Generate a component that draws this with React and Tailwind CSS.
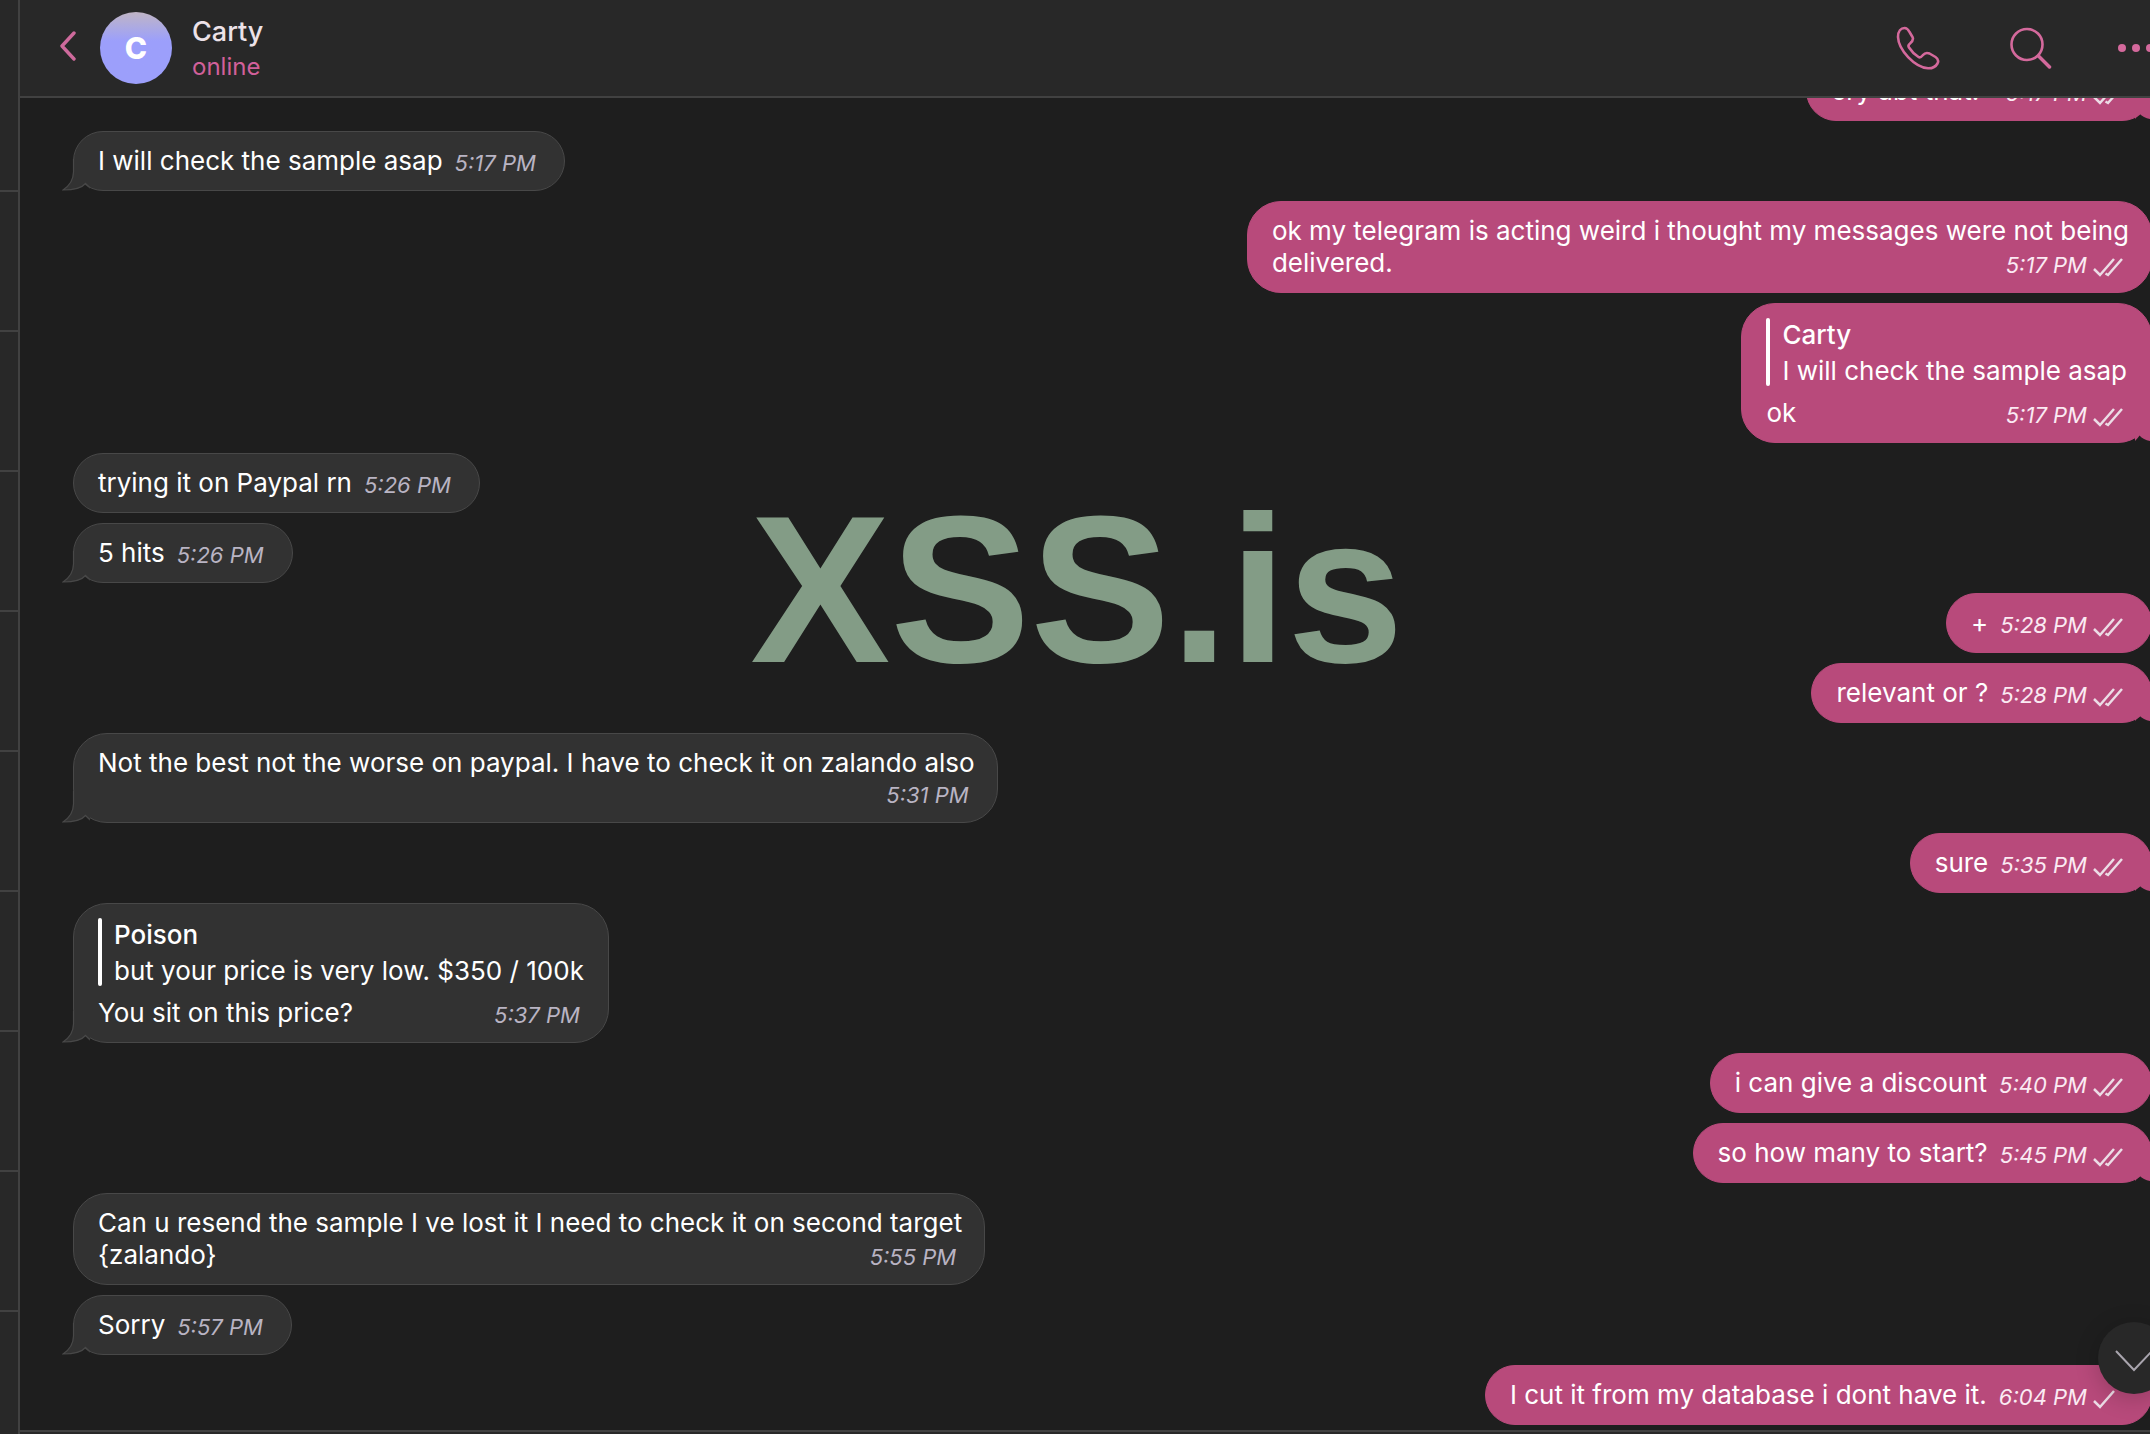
import clsx from "clsx";

// the last line of a message shares its row with the time
const messages = [
    { id: 1, out: true, tail: true, lines: ["cry abt that.\u00a0\u00a0"], time: "5:17 PM", status: "read" },
    { id: 2, out: false, tail: true, lines: ["I will check the sample asap"], time: "5:17 PM" },
    { id: 3, out: true, tail: false, lines: ["ok my telegram is acting weird i thought my messages were not being", "delivered."], time: "5:17 PM", status: "read" },
    { id: 4, out: true, tail: true, quote: { name: "Carty", text: "I will check the sample asap" }, lines: ["ok"], time: "5:17 PM", status: "read" },
    { id: 5, out: false, tail: false, lines: ["trying it on Paypal rn"], time: "5:26 PM" },
    { id: 6, out: false, tail: true, lines: ["5 hits"], time: "5:26 PM" },
    { id: 7, out: true, tail: false, lines: ["+"], time: "5:28 PM", status: "read" },
    { id: 8, out: true, tail: true, lines: ["relevant or ?"], time: "5:28 PM", status: "read" },
    { id: 9, out: false, tail: true, lines: ["Not the best not the worse on paypal. I have to check it on zalando also", ""], time: "5:31 PM" },
    { id: 10, out: true, tail: true, lines: ["sure"], time: "5:35 PM", status: "read" },
    { id: 11, out: false, tail: true, quote: { name: "Poison", text: "but your price is very low. $350 / 100k" }, lines: ["You sit on this price?"], time: "5:37 PM" },
    { id: 12, out: true, tail: false, lines: ["i can give a discount"], time: "5:40 PM", status: "read" },
    { id: 13, out: true, tail: true, lines: ["so how many to start?"], time: "5:45 PM", status: "read" },
    { id: 14, out: false, tail: false, lines: ["Can u resend the sample I ve lost it I need to check it on second target", "{zalando}"], time: "5:55 PM" },
    { id: 15, out: false, tail: true, lines: ["Sorry"], time: "5:57 PM" },
    { id: 16, out: true, tail: false, lines: ["I cut it from my database i dont have it."], time: "6:04 PM", status: "sent" },
];

function Checks({ status }) {
    return (
        <svg width="30" height="22" viewBox="0 0 30 22" fill="none" stroke="#ecdce6" strokeWidth="2.5" className="shrink-0 self-end">
            <path d="M1 12 L7 18 L21 2" />
            {status === "read" && <path d="M12.5 16.5 L15 18 L29 2" />}
        </svg>
    );
}

function Tail({ out }) {
    return (
        <svg
            width="28"
            height="32"
            viewBox="0 0 28 32"
            className={clsx("absolute bottom-[-1px]", out ? "right-[-12px] -scale-x-100" : "left-[-12px]")}
        >
            <path d="M11 0 V13 C11 21 7 27 1 31 C11 31 19 30 23.5 24.5 C25 27 27 29 28 30 V0 Z" fill={out ? "#b84a7b" : "#323232"} />
            {!out && (
                <path d="M11.5 0 V13 C11.5 21 7 27 1 31 C11 31 19 30 23.5 24.5 C25 26 26.5 27.5 28 28.5" fill="none" stroke="#484848" strokeWidth="1.2" />
            )}
        </svg>
    );
}

function Message({ m }) {
    const first = m.lines.slice(0, -1);
    const last = m.lines[m.lines.length - 1];
    return (
        <li className={clsx("flex", m.out ? "justify-end" : "justify-start")}>
            <div
                className={clsx(
                    "relative flex flex-col justify-center border pl-6 pr-7 py-[13px] whitespace-nowrap",
                    first[0] || m.quote ? "rounded-[34px]" : "rounded-[30px]",
                    m.out ? "bg-[#b84a7b] border-[#b84a7b]" : "bg-[#323232] border-[#484848]"
                )}
            >
                {m.tail && <Tail out={m.out} />}
                {m.quote && (
                    <blockquote className="relative flex gap-3 mb-2 -mr-1">
                        <span className="w-1 mt-px mb-[3px] rounded-full bg-white" />
                        <div>
                            <p className="text-[26px] leading-9 font-medium">{m.quote.name}</p>
                            <p className="text-[26px] leading-9">{m.quote.text}</p>
                        </div>
                    </blockquote>
                )}
                {first.map((line) => <p key={line} className="relative -mr-1.5 text-[26px] leading-8">{line}</p>)}
                <div className="relative flex items-end justify-between gap-3 min-h-7.5">
                    <p className="text-[26px] leading-8">{last}</p>
                    <span className={clsx("flex items-center gap-1.5 text-[22px] leading-7 italic", m.out ? "text-[#fbeaf3]" : "text-[#b9b4c3]")}>
                        <time>{m.time}</time>
                        {m.out && <Checks status={m.status} />}
                    </span>
                </div>
            </div>
        </li>
    );
}

function Header() {
    return (
        <header className="relative z-10 flex items-center h-[98px] shrink-0 bg-[#282828] border-b-2 border-[#414141] pl-10">
            <button aria-label="Back" className="text-[#ce6a9c] mb-1">
                <svg width="16" height="30" viewBox="0 0 16 30" fill="none" stroke="currentColor" strokeWidth="3.4" strokeLinecap="round" strokeLinejoin="round">
                    <path d="M14 2 L2 15 L14 28" />
                </svg>
            </button>
            <div className="flex items-center justify-center size-18 ml-6 rounded-full bg-linear-to-b from-[#c0b4c4] to-[#9c9ffb] to-40% text-white text-[30px] font-extrabold">C</div>
            <div className="flex-1 ml-5">
                <h1 className="text-[27px] leading-[38px] font-medium text-[#ece2e8]">Carty</h1>
                <p className="text-[24px] leading-8 text-[#d1609a]">online</p>
            </div>
            <div className="flex items-center text-[#d4699c]">
                <button aria-label="Call" className="mr-[70px]">
                    <svg width="44" height="44" viewBox="0 0 44 44" fill="none" stroke="currentColor" strokeWidth="2.6" strokeLinejoin="round">
                        <path d="M2 11 C2 5 5 2 8.5 2 C11 2 12 3 13.5 6 L16.5 11 C18 14 16.5 15.5 14 17.5 C12 19 12 20 13 21.5 C15.5 25.5 19.5 29 22.5 31 C24 32 25 31.5 27 29 C29 26.5 31 26.5 33.5 27.5 L39.5 31 C42.5 33 42.8 35 41.5 37.5 C39.5 41 36.5 42.5 32 42.3 C18.5 41 2.5 24 2 11 Z" />
                    </svg>
                </button>
                <button aria-label="Search" className="mr-[66px]">
                    <svg width="42" height="42" viewBox="0 0 42 42" fill="none" stroke="currentColor" strokeWidth="2.6" strokeLinecap="round">
                        <circle cx="17" cy="17.5" r="15.5" />
                        <path d="M28.5 29 L39.5 40" strokeWidth="3.5" />
                    </svg>
                </button>
                <button aria-label="More" className="-mr-1">
                    <svg width="36" height="8" viewBox="0 0 36 8" fill="currentColor">
                        <circle cx="4" cy="4" r="4" />
                        <circle cx="18" cy="4" r="4" />
                        <circle cx="32" cy="4" r="4" />
                    </svg>
                </button>
            </div>
        </header>
    );
}

function App() {
    return (
        <div className="relative flex h-screen overflow-hidden bg-[#1e1e1e] text-white font-['Inter','Liberation_Sans',sans-serif]">
            <aside className="w-5 shrink-0 pt-[52px] bg-[#282828] border-r-2 border-[#414141]">
                {Array.from({ length: 9 }, (_, i) => (
                    <div key={i} className="h-[140px] border-b-2 border-[#414141]" />
                ))}
            </aside>
            <main className="relative flex flex-col flex-1 min-w-0">
                <Header />
                <ul className="flex flex-col justify-end flex-1 min-h-0 gap-2.5 pl-[53px] pb-[5px] -mr-0.5">
                    {messages.map((m) => <Message key={m.id} m={m} />)}
                </ul>
                <footer className="h-1 shrink-0 bg-[#282828] border-t-2 border-[#414141]" />
                <button aria-label="Scroll to bottom" className="absolute bottom-10 -right-5 flex items-center justify-center size-18 rounded-full bg-[#282828] text-[#a9a5ae] shadow-[0_4px_24px_rgba(0,0,0,0.2)]">
                    <svg width="38" height="24" viewBox="0 0 38 24" fill="none" stroke="currentColor" strokeWidth="2" className="mt-1.5">
                        <path d="M1 2 L19 21 L37 2" />
                    </svg>
                </button>
            </main>
            <div className="absolute inset-x-0 top-[485px] pl-1 text-center text-[210px] leading-none font-bold text-[#839c86] font-['Liberation_Sans',Arial,sans-serif] pointer-events-none">XSS.is</div>
        </div>
    );
}

export default App;
